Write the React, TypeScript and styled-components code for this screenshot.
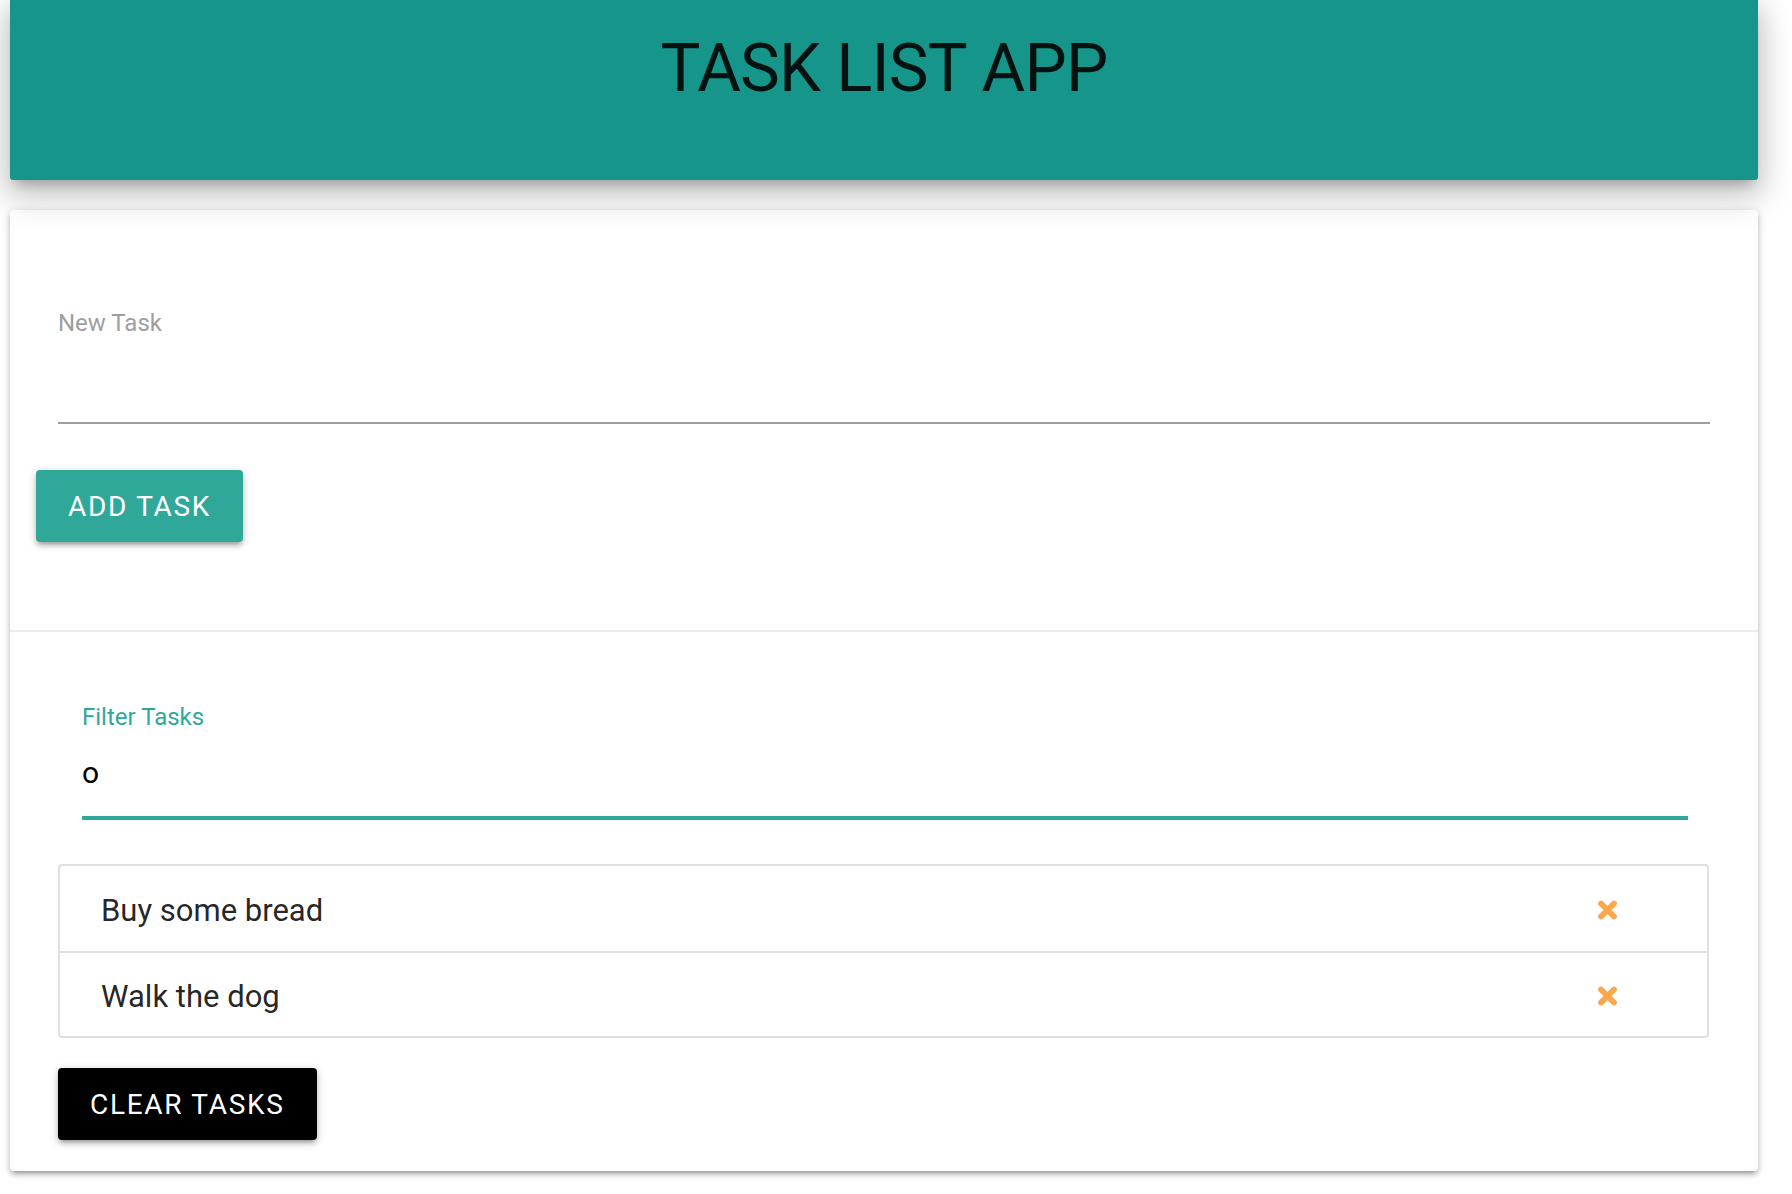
import React, { useState } from "react";
import styled, { createGlobalStyle } from "styled-components";

const GlobalStyle = createGlobalStyle`
  html, body {
    margin: 0;
    padding: 0;
    background: #ffffff;
  }
  body {
    font-family: Roboto, "Noto Sans", "Liberation Sans", sans-serif;
    -webkit-font-smoothing: antialiased;
  }
  * { box-sizing: border-box; }
`;

const Page = styled.div`
  width: 1748px;
  margin-left: 10px;
  padding-bottom: 22px;
`;

const Header = styled.header`
  height: 180px;
  background: #16968a;
  border-radius: 0 0 3px 3px;
  box-shadow: 0 16px 34px 4px rgba(0, 0, 0, 0.14),
    0 6px 28px 4px rgba(0, 0, 0, 0.12), 0 10px 10px -6px rgba(0, 0, 0, 0.2);
  position: relative;
  z-index: 1;
`;

const Title = styled.h1`
  margin: 0;
  padding-top: 35px;
  text-align: center;
  font-size: 67px;
  line-height: 67px;
  font-weight: 400;
  letter-spacing: -0.8px;
  color: rgba(0, 0, 0, 0.88);
`;

const Card = styled.main`
  margin-top: 30px;
  background: #ffffff;
  border-radius: 4px;
  box-shadow: 0 4px 4px 0 rgba(0, 0, 0, 0.14), 0 6px 2px -4px rgba(0, 0, 0, 0.12),
    0 2px 10px 0 rgba(0, 0, 0, 0.2);
`;

const AddSection = styled.section`
  padding: 101px 26px 88px;
  display: flex;
  flex-direction: column;
  align-items: flex-start;
`;

const FilterSection = styled.section`
  border-top: 2px solid #ececec;
  padding: 73px 48px 31px 48px;
  display: flex;
  flex-direction: column;
  align-items: flex-start;
`;

const Field = styled.div<{ $inset: string }>`
  align-self: stretch;
  margin: ${(p) => p.$inset};
  display: flex;
  flex-direction: column;
`;

const Label = styled.label<{ $active?: boolean }>`
  display: block;
  height: 24px;
  font-size: 24px;
  line-height: 24px;
  color: ${(p) => (p.$active ? "#2fa89a" : "#9e9e9e")};
`;

const TextInput = styled.input<{ $active?: boolean; $h: number }>`
  display: block;
  width: 100%;
  height: ${(p) => p.$h}px;
  box-sizing: content-box;
  padding: 0;
  margin: 0;
  border: none;
  outline: none;
  background: transparent;
  font-family: Roboto, "Noto Sans", sans-serif;
  font-size: 30px;
  color: #000000;
  border-bottom: ${(p) => (p.$active ? "4px solid #2fa89a" : "2px solid #9e9e9e")};
`;

const Button = styled.button<{ $dark?: boolean }>`
  height: 72px;
  padding: 0 32px;
  border: none;
  border-radius: 4px;
  background: ${(p) => (p.$dark ? "#000000" : "#2fa89a")};
  color: #ffffff;
  font-family: Roboto, "Noto Sans", sans-serif;
  font-size: 28px;
  letter-spacing: 1.7px;
  text-transform: uppercase;
  cursor: pointer;
  box-shadow: 0 4px 4px 0 rgba(0, 0, 0, 0.14), 0 6px 2px -4px rgba(0, 0, 0, 0.12),
    0 2px 10px 0 rgba(0, 0, 0, 0.2);
`;

const AddButton = styled(Button)`
  margin-top: 46px;
`;

const Collection = styled.ul`
  align-self: stretch;
  list-style: none;
  margin: 44px 1px 30px 0;
  padding: 0;
  border: 2px solid #e0e0e0;
  border-radius: 4px;
`;

const Item = styled.li`
  height: 85px;
  display: flex;
  align-items: center;
  justify-content: space-between;
  padding: 3px 89px 0 41px;
  font-size: 31px;
  color: rgba(0, 0, 0, 0.87);
  & + & {
    border-top: 2px solid #e0e0e0;
    height: 85px;
  }
`;

const DeleteLink = styled.a`
  display: flex;
  width: 21px;
  height: 20px;
  cursor: pointer;
`;

const CloseIcon = () => (
  <svg width="21" height="20" viewBox="0 0 21 20" aria-hidden="true">
    <path
      d="M4 3.5 L17 16.5 M17 3.5 L4 16.5"
      stroke="#ffa64d"
      strokeWidth="5.8"
      strokeLinecap="round"
    />
  </svg>
);

export default function App() {
  const [filter, setFilter] = useState("o");
  const [task, setTask] = useState("");
  const tasks = ["Buy some bread", "Walk the dog"];
  return (
    <>
      <GlobalStyle />
      <Page>
        <Header>
          <Title>TASK LIST APP</Title>
        </Header>
        <Card>
          <AddSection>
            <Field $inset="0 22px">
              <Label htmlFor="task">New Task</Label>
              <TextInput
                id="task"
                $h={87}
                value={task}
                onChange={(e) => setTask(e.target.value)}
              />
            </Field>
            <AddButton>Add Task</AddButton>
          </AddSection>
          <FilterSection>
            <Field $inset="0 22px 0 24px">
              <Label htmlFor="filter" $active>
                Filter Tasks
              </Label>
              <TextInput
                id="filter"
                $active
                $h={87}
                value={filter}
                onChange={(e) => setFilter(e.target.value)}
              />
            </Field>
            <Collection>
              {tasks.map((t) => (
                <Item key={t}>
                  <span>{t}</span>
                  <DeleteLink>
                    <CloseIcon />
                  </DeleteLink>
                </Item>
              ))}
            </Collection>
            <Button $dark>Clear Tasks</Button>
          </FilterSection>
        </Card>
      </Page>
    </>
  );
}
